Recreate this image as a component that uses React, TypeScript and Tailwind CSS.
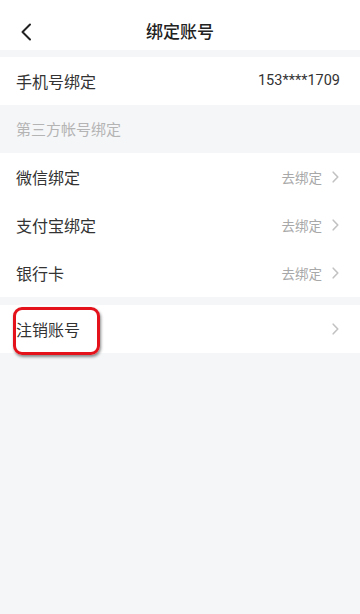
const FONT = { fontFamily: '"Noto Sans CJK SC", "Noto Sans", Roboto, sans-serif' };

function Chevron() {
  return (
    <svg width="7" height="12" viewBox="0 0 7 12" fill="none">
      <path d="M1.2 1.2L5.8 6L1.2 10.8" stroke="#c2c2c2" strokeWidth="1.6" strokeLinecap="round" strokeLinejoin="round" />
    </svg>
  );
}

function Row({ label, value }: { label: string; value: string }) {
  return (
    <div className="flex h-12 items-center justify-between bg-white pl-4 pr-[21px]">
      <span className="text-[16px] text-[#333]">{label}</span>
      <span className="flex items-center gap-[10px] text-[13.5px] text-[#a8a8a8]">
        {value}
        <Chevron />
      </span>
    </div>
  );
}

export default function App() {
  return (
    <div className="flex min-h-[614px] w-[360px] flex-col bg-[#f5f6f8]" style={FONT}>
      {/* Header */}
      <div className="relative flex h-[50px] items-center justify-center bg-white">
        <svg className="absolute left-[20px] top-[23px]" width="12" height="18" viewBox="0 0 12 18" fill="none">
          <path d="M10 1.5L2.5 9L10 16.5" stroke="#222" strokeWidth="2" strokeLinecap="round" strokeLinejoin="round" />
        </svg>
        <span className="mt-3 text-[17px] font-medium text-[#222]">绑定账号</span>
      </div>

      <div className="mt-[7px] flex h-12 items-center justify-between bg-white pl-4 pr-5">
        <span className="text-[16px] text-[#333]">手机号绑定</span>
        <span className="text-[14.5px] text-[#333]" style={{ fontFamily: 'Roboto, sans-serif' }}>153****1709</span>
      </div>

      <div className="flex h-12 items-center pl-4 text-[15px] text-[#b4b4b4]">第三方帐号绑定</div>

      <Row label="微信绑定" value="去绑定" />
      <Row label="支付宝绑定" value="去绑定" />
      <Row label="银行卡" value="去绑定" />

      <div className="relative mt-2 flex h-12 items-center justify-between bg-white pl-4 pr-[21px]">
        <span className="text-[16px] text-[#333]">注销账号</span>
        <Chevron />
        <div className="absolute left-[13px] top-[2px] h-[48px] w-[87px] rounded-[9px] border-[3px] border-[#e3121b] shadow-[1px_2px_3px_rgba(0,0,0,0.45)]" />
      </div>
    </div>
  );
}
